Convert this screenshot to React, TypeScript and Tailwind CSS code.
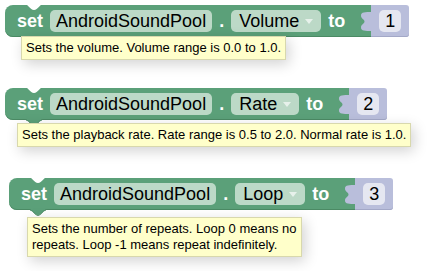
import React from "react"

const fontClass = "font-['Liberation_Sans',Arial,sans-serif]"
const pillClass = "flex h-[22px] items-center rounded-[5px] text-[18px] text-black"

interface SetterRow {
    id: number
    property: string
    value: string
    tip: string[]
    blockClass: string
    tipClass: string
}

const rows: SetterRow[] = [
    {
        id: 1,
        property: "Volume",
        value: "1",
        tip: ["Sets the volume. Volume range is 0.0 to 1.0."],
        blockClass: "mt-[5px] ml-[5px]",
        tipClass: "-mt-px ml-[21px]",
    },
    {
        id: 2,
        property: "Rate",
        value: "2",
        tip: ["Sets the playback rate. Rate range is 0.5 to 2.0. Normal rate is 1.0."],
        blockClass: "mt-[28px] ml-[5px]",
        tipClass: "mt-[3px] ml-[17px]",
    },
    {
        id: 3,
        property: "Loop",
        value: "3",
        tip: ["Sets the number of repeats. Loop 0 means no", "repeats. Loop -1 means repeat indefinitely."],
        blockClass: "mt-[31px] ml-[9px]",
        tipClass: "mt-[7px] ml-[27px]",
    },
]

// previous-statement notch cut into the top edge
const TopNotch = () => (
    <svg className="absolute left-[20px] -top-px" width="18" height="7" viewBox="0 0 18 7">
        <path d="M0,0 C3,0 5,6 9,6 C13,6 15,0 18,0 Z" fill="#ffffff" />
    </svg>
)

// next-statement bump hanging below the block
const BottomBump = () => (
    <svg className="absolute left-[20px] top-[31px]" width="18" height="7" viewBox="0 0 18 7">
        <path d="M0,0 C3,0 5,6 9,6 C13,6 15,0 18,0 Z" fill="#5ba079" />
        <path d="M1,1 C4,1 6,6.5 9,6.5 C12,6.5 14,1 17,1" fill="none" stroke="#4b8a64" strokeWidth="1" />
    </svg>
)

// output tab of the value block, plugged into the setter
const OutputTab = () => (
    <svg className="absolute -left-[11px] top-[7px]" width="12" height="19" viewBox="0 0 12 19">
        <path d="M12,0 C5,0 1,0 1,3.5 C1,7 4.5,7 4.5,9.5 C4.5,12 1,12 1,15.5 C1,19 5,19 12,19 Z" fill="#b9bedb" />
    </svg>
)

const Arrow = () => (
    <svg className="ml-[6px] mt-px" width="8" height="5" viewBox="0 0 8 5">
        <path d="M0,0 L8,0 L4,5 Z" fill="#e7f1eb" />
    </svg>
)

const SetterBlock = ({ property, value, blockClass }: SetterRow) => (
    <div className={`relative z-0 flex ${blockClass}`}>
        <div className="relative flex h-8 items-center gap-[7px] rounded-l-[8px] bg-[#5ba079] pl-3 pr-[26px] shadow-[inset_0_-1px_0_#4b8a64]">
            <TopNotch />
            <BottomBump />
            <span className="text-[18px] font-bold text-white">set</span>
            <span className={`${pillClass} bg-[#bcd9c7] px-1.5`}>AndroidSoundPool</span>
            <span className="text-[18px] font-bold text-white">.</span>
            <span className={`${pillClass} bg-[#bcd9c7] px-2`}>
                {property}
                <Arrow />
            </span>
            <span className="text-[18px] font-bold text-white">to</span>
        </div>
        <div className="relative flex h-8 items-center rounded-r-[3px] bg-[#b9bedb] px-2 shadow-[inset_0_-1px_0_#a3a8c7]">
            <OutputTab />
            <span className={`${pillClass} bg-[#e5e7f1] px-1.5`}>{value}</span>
        </div>
    </div>
)

const Tooltip = ({ tip, tipClass }: SetterRow) => (
    <div className={`relative z-10 w-fit border border-[#d8d8ad] bg-[#ffffca] px-1 py-[3px] text-[13px] leading-4 text-black shadow-[3px_4px_14px_rgba(0,0,0,0.18)] ${tipClass}`}>
        {tip.map((line) => (
            <div key={line}>{line}</div>
        ))}
    </div>
)

export default function App() {
    return (
        <div className={`flex h-[271px] w-[430px] flex-col overflow-hidden bg-white ${fontClass}`}>
            {rows.map((row) => (
                <div key={row.id} className="flex flex-col">
                    <SetterBlock {...row} />
                    <Tooltip {...row} />
                </div>
            ))}
        </div>
    )
}
